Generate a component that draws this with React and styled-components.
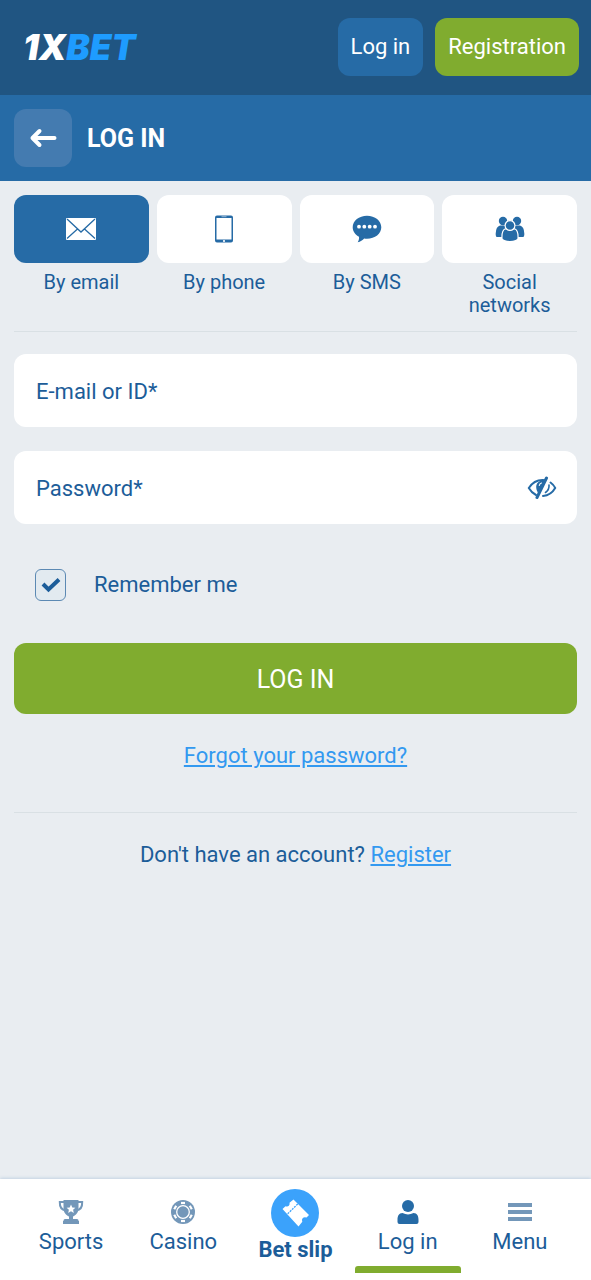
import React, { useState } from "react";
import styled, { createGlobalStyle } from "styled-components";

const GlobalStyle = createGlobalStyle`
  :root {
    --navy: #205582;
    --blue: #266ba6;
    --text: #1c5d99;
    --link: #3399f0;
    --green: #80ac2f;
    --page: #e9edf1;
    --line: #d9e0e4;
    --muted: #7397b9;
  }
  * {
    box-sizing: border-box;
  }
  body {
    margin: 0;
    background-color: var(--page);
    color: var(--text);
    font-family: Roboto, "Liberation Sans", sans-serif;
    font-size: 22px;
    line-height: 26px;
  }
  button,
  input {
    font: inherit;
    color: inherit;
  }
  svg {
    display: block;
  }
`;

const Page = styled.div`
  display: flex;
  flex-direction: column;
  min-height: 100vh;
`;

const Header = styled.header`
  display: flex;
  align-items: center;
  gap: 12px;
  padding: 18px 12px 19px 23px;
  background-color: var(--navy);
`;

const Logo = styled.a`
  margin-right: auto;
  color: #fff;
  font-family: Inter, "Liberation Sans", sans-serif;
  font-size: 35px;
  font-style: italic;
  font-weight: 900;
  line-height: 40px;
  text-decoration: none;

  span {
    color: #1e9cff;
  }
`;

const HeaderButton = styled.button`
  height: 58px;
  padding: 0 13px;
  border: 0;
  border-radius: 12px;
  background-color: ${({ $primary }) =>
    $primary ? "var(--green)" : "var(--blue)"};
  color: #fff;
  cursor: pointer;
`;

const TitleBar = styled.div`
  display: flex;
  align-items: center;
  gap: 15px;
  padding: 14px;
  background-color: var(--blue);
  color: #fff;
`;

const BackButton = styled.button`
  display: flex;
  align-items: center;
  justify-content: center;
  width: 58px;
  height: 58px;
  padding: 0;
  border: 0;
  border-radius: 12px;
  background-color: #447bb0;
  cursor: pointer;
`;

const Title = styled.h1`
  margin: 0;
  padding-top: 2px;
  font-size: 25px;
  font-weight: 700;
  line-height: 30px;
`;

const Content = styled.main`
  flex: 1;
  padding: 14px;
`;

const Tabs = styled.div`
  display: grid;
  grid-template-columns: repeat(4, 1fr);
  gap: 8px;
  padding-bottom: 14px;
  border-bottom: 1px solid var(--line);
`;

const Tab = styled.button`
  display: flex;
  flex-direction: column;
  gap: 8px;
  padding: 0;
  border: 0;
  background: none;
  font-size: 20px;
  line-height: 23px;
  cursor: pointer;
`;

const TabTile = styled.span`
  display: flex;
  align-items: center;
  justify-content: center;
  width: 100%;
  height: 68px;
  border-radius: 12px;
  background-color: ${({ $active }) => ($active ? "var(--blue)" : "#fff")};
  color: ${({ $active }) => ($active ? "#fff" : "var(--blue)")};
`;

const TabLabel = styled.span`
  width: 100%;
  padding: 0 12px;
  text-align: center;
`;

const Form = styled.form`
  display: flex;
  flex-direction: column;
  gap: 24px;
  padding-top: 22px;
`;

const Field = styled.div`
  display: flex;
  align-items: center;
  height: 73px;
  padding: 0 20px 0 22px;
  border-radius: 12px;
  background-color: #fff;
`;

const Input = styled.input`
  flex: 1;
  min-width: 0;
  height: 100%;
  padding: 2px 0 0;
  border: 0;
  outline: 0;
  background: none;

  &::placeholder {
    color: var(--text);
    opacity: 1;
  }
`;

const IconButton = styled.button`
  padding: 0;
  border: 0;
  background: none;
  cursor: pointer;
`;

const Remember = styled.label`
  display: flex;
  align-items: center;
  gap: 28px;
  align-self: flex-start;
  padding: 21px 20px 18px 21px;
  cursor: pointer;
`;

const CheckBox = styled.span`
  display: grid;
  place-items: center;

  input,
  svg {
    grid-area: 1 / 1;
  }
  input {
    width: 31px;
    height: 32px;
    margin: 0;
    appearance: none;
    border: 1px solid #5c89b3;
    border-radius: 6px;
    background-color: #e2eaf0;
  }
  svg {
    pointer-events: none;
  }
`;

const SubmitButton = styled.button`
  height: 71px;
  padding: 2px 0 0;
  border: 0;
  border-radius: 12px;
  background-color: var(--green);
  color: #fff;
  font-size: 25px;
  cursor: pointer;
`;

const Link = styled.a`
  color: var(--link);
  text-decoration: underline;
`;

const Forgot = styled.p`
  margin: 0;
  padding: 29px 0 43px;
  border-bottom: 1px solid var(--line);
  text-align: center;
`;

const SignUp = styled.p`
  margin: 0;
  padding-top: 29px;
  text-align: center;
`;

const BottomNav = styled.nav`
  display: grid;
  grid-template-columns: repeat(5, 1fr);
  height: 101px;
  padding: 0 15px;
  background-color: #fff;
  box-shadow: 0 -1px 3px #c3d2e3;
`;

const NavItem = styled.a`
  display: flex;
  flex-direction: column;
  align-items: center;
  gap: 4px;
  padding-top: 20px;
  color: var(--text);
  font-weight: ${({ $strong }) => ($strong ? 700 : 400)};
  text-decoration: none;

  ${({ $strong }) => $strong && "padding-top: 10px; gap: 0;"}

  svg {
    color: ${({ $active }) => ($active ? "var(--blue)" : "var(--muted)")};
  }

  &::after {
    content: "";
    width: calc(100% - 6px);
    height: 7px;
    margin-top: 7px;
    border-radius: 3px 3px 0 0;
    background-color: ${({ $active }) =>
      $active ? "var(--green)" : "transparent"};
  }
`;

const SlipBadge = styled.span`
  display: flex;
  align-items: center;
  justify-content: center;
  width: 48px;
  height: 48px;
  border-radius: 50%;
  background-color: #3ba2fb;

  svg {
    color: #fff;
  }
`;

const ArrowIcon = () => (
  <svg width="28" height="20" viewBox="0 0 28 20" fill="none" stroke="#fff" strokeWidth="4" strokeLinecap="round" strokeLinejoin="round">
    <path d="M25.500 10H3.500M10.500 3L3.500 10l7 7" />
  </svg>
);

const MailIcon = () => (
  <svg width="30" height="22" viewBox="0 0 30 22">
    <rect x="0" y="0" width="30" height="22" rx="1" fill="currentColor" />
    <path d="M1 1l14 13L29 1M1 20.500l10.500-9.500M29 20.500L18.500 11" fill="none" stroke="#266ba6" strokeWidth="1.300" />
  </svg>
);

const PhoneIcon = () => (
  <svg width="20" height="28" viewBox="0 0 20 28">
    <path fillRule="evenodd" fill="currentColor" d="M3 .5h14a2 2 0 0 1 2 2v23a2 2 0 0 1-2 2H3a2 2 0 0 1-2-2v-23a2 2 0 0 1 2-2zM2.500 3v21.500h15V3z" />
    <path d="M7.500 1.700h5" stroke="#fff" strokeWidth=".5" />
    <circle cx="10" cy="26" r="1.100" fill="#fff" />
  </svg>
);

const SmsIcon = () => (
  <svg width="30" height="28" viewBox="0 0 30 28">
    <path fill="currentColor" d="M15 .8c8 0 14.300 5 14.300 11.500S23 23.700 15 23.700c-1 0-1.900-.1-2.800-.2-1.700 1.800-3.700 3.200-6.500 3.800 1.100-1.700 1.600-3.600 1.300-5.500C3.300 19.700.7 16.300.7 12.300.7 5.800 7 .8 15 .8z" />
    {[7, 12.300, 17.700, 23].map((x) => (
      <circle key={x} cx={x} cy="11.700" r="1.900" fill="#fff" />
    ))}
  </svg>
);

const PeopleIcon = () => (
  <svg width="30" height="26" viewBox="0 0 30 26" fill="currentColor">
    <circle cx="8" cy="5" r="4.200" />
    <circle cx="22" cy="5" r="4.200" />
    <path d="M5 9.500h6v11.500H1.500q-1-1-.8-3.500.2-7 4.300-8zM25 9.500h-6v11.500h9.500q1-1 .8-3.500-.2-7-4.300-8z" />
    <path d="M10.500 12.800h9c3 1 3.800 5 3.500 10-2 3.700-14 3.700-16 0-.3-5 .5-9 3.500-10z" stroke="#fff" strokeWidth="1.200" />
    <circle cx="15" cy="9.500" r="4.900" stroke="#fff" strokeWidth="1.200" />
  </svg>
);

const EyeOffIcon = () => (
  <svg width="30" height="24" viewBox="0 0 30 24" fill="none" stroke="#266ba6" strokeWidth="2" strokeLinecap="round">
    <path d="M9 19C6 17.500 3.500 15 1.800 12 5 7 9.500 4 15.500 4c1 0 1.600.1 2.500.3" />
    <path d="M23.500 6.500c2 1.400 3.700 3.300 4.700 5.500-2.700 4.700-7 7.500-12.200 8" />
    <path d="M16 4.500c-4.200 0-7 3-6.800 6.800.1 2.200.8 4 1.800 5.500l8-12z" fill="#266ba6" stroke="none" />
    <path d="M12.300 9.500c.2-1.300 1-2.200 2.200-2.500" stroke="#fff" strokeWidth="1.100" />
    <path d="M22 9c.3 3.200-1 5.800-3.500 7.500" strokeWidth="1.600" />
    <path d="M19.500 2L10 21.500" strokeWidth="3" />
  </svg>
);

const TrophyIcon = () => (
  <svg width="26" height="26" viewBox="0 0 26 26" fill="currentColor">
    <path d="M5.500 1h15v8.500c0 4-2.700 6.800-5.500 8v2.500h4q1.500 0 1.500 1.500V22h.5v3H5v-3h.500v-.5q0-1.500 1.500-1.500h4v-2.500c-2.800-1.200-5.500-4-5.500-8z" />
    <path d="M6.500 3H1.800c-.2 5 2 8 6 8.500M19.500 3h4.700c.2 5-2 8-6 8.500" fill="none" stroke="currentColor" strokeWidth="2" />
    <path d="M13 5.500l1.300 2.900 3.100.3-2.300 2.100.7 3.100L13 12.300l-2.800 1.600.7-3.100-2.300-2.100 3.100-.3z" fill="#fff" />
  </svg>
);

const ChipIcon = () => (
  <svg width="26" height="26" viewBox="0 0 26 26" fill="none">
    <circle cx="13" cy="13" r="12" fill="currentColor" />
    <circle cx="13" cy="13" r="6.300" stroke="#fff" strokeWidth="1.300" />
    {[0, 60, 120, 180, 240, 300].map((angle) => (
      <path key={angle} d="M11 4h4" stroke="#fff" strokeWidth="2.200" transform={`rotate(${angle} 13 13)`} />
    ))}
  </svg>
);

const TicketIcon = () => (
  <svg width="30" height="30" viewBox="0 0 30 30">
    <path fill="currentColor" d="M13.500 1.500L29 17l-2.500 2.600q-2.200-1-3.700.5t-.5 3.700L18.500 28.500 2.500 11l3-2.800q2 .9 3.300-.4t.7-3z" />
    <path d="M17.700 6L7.500 16" stroke="#3ba2fb" strokeWidth="1.300" strokeDasharray="2 1" />
  </svg>
);

const UserIcon = () => (
  <svg width="26" height="26" viewBox="0 0 26 26" fill="currentColor">
    <circle cx="13" cy="7" r="6" />
    <path d="M7.500 14q5.500 2.800 11 0c3.700 0 5 3 5 7v2q0 2-2 2h-17q-2 0-2-2v-2c0-4 1.300-7 5-7z" />
  </svg>
);

const MenuIcon = () => (
  <svg width="26" height="26" viewBox="0 0 26 26" fill="currentColor">
    <path d="M1 4h24v4H1zM1 11h24v4H1zM1 18h24v4H1z" />
  </svg>
);

const tabs = [
  { label: "By email", icon: MailIcon },
  { label: "By phone", icon: PhoneIcon },
  { label: "By SMS", icon: SmsIcon },
  { label: "Social networks", icon: PeopleIcon },
];

const App = () => {
  const [method, setMethod] = useState("By email");
  const [remember, setRemember] = useState(true);
  const [visible, setVisible] = useState(false);

  return (
    <Page>
      <GlobalStyle />
      <Header>
        <Logo href="#">
          1X<span>BET</span>
        </Logo>
        <HeaderButton>Log in</HeaderButton>
        <HeaderButton $primary>Registration</HeaderButton>
      </Header>
      <TitleBar>
        <BackButton aria-label="Back">
          <ArrowIcon />
        </BackButton>
        <Title>LOG IN</Title>
      </TitleBar>

      <Content>
        <Tabs>
          {tabs.map(({ label, icon: Icon }) => (
            <Tab
              key={label}
              aria-pressed={method === label}
              onClick={() => setMethod(label)}
            >
              <TabTile $active={method === label}>
                <Icon />
              </TabTile>
              <TabLabel>{label}</TabLabel>
            </Tab>
          ))}
        </Tabs>

        <Form onSubmit={(e) => e.preventDefault()}>
          <Field>
            <Input aria-label="E-mail or ID" placeholder="E-mail or ID*" />
          </Field>
          <Field>
            <Input
              type={visible ? "text" : "password"}
              aria-label="Password"
              placeholder="Password*"
            />
            <IconButton
              type="button"
              aria-label="Show password"
              onClick={() => setVisible(!visible)}
            >
              <EyeOffIcon />
            </IconButton>
          </Field>
          <Remember>
            <CheckBox>
              <input
                type="checkbox"
                checked={remember}
                onChange={(e) => setRemember(e.target.checked)}
              />
              {remember && (
                <svg width="20" height="16" viewBox="0 0 20 16" fill="none" stroke="#1c5d99" strokeWidth="4">
                  <path d="M2 7l5.500 5.500L18 2.500" />
                </svg>
              )}
            </CheckBox>
            Remember me
          </Remember>
          <SubmitButton>LOG IN</SubmitButton>
        </Form>

        <Forgot>
          <Link href="#">Forgot your password?</Link>
        </Forgot>
        <SignUp>
          Don't have an account? <Link href="#">Register</Link>
        </SignUp>
      </Content>

      <BottomNav>
        <NavItem href="#">
          <TrophyIcon />
          Sports
        </NavItem>
        <NavItem href="#">
          <ChipIcon />
          Casino
        </NavItem>
        <NavItem href="#" $strong>
          <SlipBadge>
            <TicketIcon />
          </SlipBadge>
          Bet slip
        </NavItem>
        <NavItem href="#" $active>
          <UserIcon />
          Log in
        </NavItem>
        <NavItem href="#">
          <MenuIcon />
          Menu
        </NavItem>
      </BottomNav>
    </Page>
  );
};

export default App;
